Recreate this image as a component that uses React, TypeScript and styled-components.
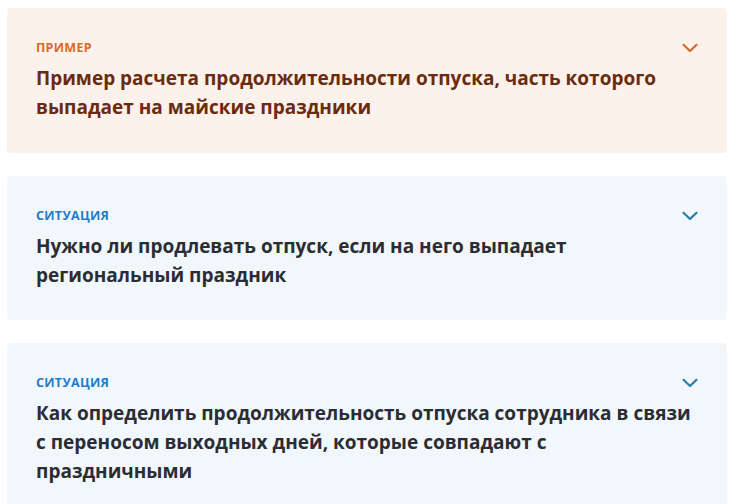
import React from "react";
import styled, { createGlobalStyle } from "styled-components";

const Global = createGlobalStyle`
  html, body { margin: 0; padding: 0; background: #ffffff; }
  body { font-family: "Open Sans", "Liberation Sans", sans-serif; }
`;

type Kind = "example" | "situation";

const palette = {
  example: { bg: "#fcf1eb", label: "#df6a24", title: "#6a2b0e", chevron: "#d8682a" },
  situation: { bg: "#f2f7fb", label: "#1c7cce", title: "#2a2d33", chevron: "#2a7ba8" },
};

const Page = styled.div`
  display: flex;
  flex-direction: column;
  gap: 23px;
  padding: 8px 13px 0 7px;
`;

const Card = styled.section<{ $kind: Kind }>`
  background: ${(p) => palette[p.$kind].bg};
  border-radius: 4px;
  padding: 32px 29px 30.5px 29px;
`;

const Head = styled.div`
  display: flex;
  align-items: center;
  justify-content: space-between;
  height: 16px;
`;

const Label = styled.span<{ $kind: Kind }>`
  font-family: "Open Sans", "Liberation Sans", sans-serif;
  font-weight: 700;
  font-size: 12.5px;
  line-height: 16px;
  letter-spacing: 0.3px;
  text-transform: uppercase;
  color: ${(p) => palette[p.$kind].label};
`;

const Chevron = styled.svg<{ $kind: Kind }>`
  width: 16px;
  height: 10px;
  color: ${(p) => palette[p.$kind].chevron};
  flex: none;
`;

const Title = styled.h3<{ $kind: Kind }>`
  margin: 8px 0 0 0;
  font-family: "Open Sans", "Liberation Sans", sans-serif;
  font-weight: 700;
  font-size: 19px;
  line-height: 29px;
  color: ${(p) => palette[p.$kind].title};
`;

const items: { kind: Kind; label: string; title: string }[] = [
  {
    kind: "example",
    label: "Пример",
    title: "Пример расчета продолжительности отпуска, часть которого выпадает на майские праздники",
  },
  {
    kind: "situation",
    label: "Ситуация",
    title: "Нужно ли продлевать отпуск, если на него выпадает региональный праздник",
  },
  {
    kind: "situation",
    label: "Ситуация",
    title:
      "Как определить продолжительность отпуска сотрудника в связи с переносом выходных дней, которые совпадают с праздничными",
  },
];

export default function App() {
  return (
    <>
      <Global />
      <Page>
        {items.map((it, i) => (
          <Card key={i} $kind={it.kind}>
            <Head>
              <Label $kind={it.kind}>{it.label}</Label>
              <Chevron $kind={it.kind} viewBox="0 0 16 10" fill="none">
                <path d="M1.5 1.8 L8 8 L14.5 1.8" stroke="currentColor" strokeWidth="2.2" strokeLinecap="round" strokeLinejoin="round" />
              </Chevron>
            </Head>
            <Title $kind={it.kind}>{it.title}</Title>
          </Card>
        ))}
      </Page>
    </>
  );
}
